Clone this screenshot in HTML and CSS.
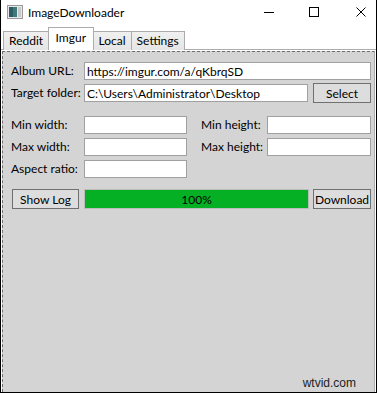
FILE: index.html
```html
<!DOCTYPE html>
<html lang="en">
<head>
    <meta charset="UTF-8">
    <meta name="viewport" content="width=device-width, initial-scale=1.0">
    <title>ImageDownloader</title>
    <link rel="stylesheet" href="styles.css">
</head>
<body>
    <div class="window">
        <div class="titlebar">
            <svg class="app-icon" width="16" height="14" viewBox="0 0 16 14">
                <rect x="0.5" y="0.5" width="15" height="13" fill="#e8e8e8" stroke="#9a9a9a"/>
                <rect x="2" y="2" width="8" height="10" fill="#3f7a7a"/>
                <rect x="2" y="2" width="4" height="10" fill="#2d5e66"/>
                <rect x="11" y="2" width="3" height="10" fill="#c8c8c8"/>
            </svg>
            <span class="title">ImageDownloader</span>
            <div class="controls">
                <svg class="ctl" width="10" height="10" viewBox="0 0 10 10"><path d="M0 5.5h10" stroke="#000" stroke-width="1"/></svg>
                <svg class="ctl" width="10" height="10" viewBox="0 0 10 10"><rect x="0.5" y="0.5" width="9" height="9" fill="none" stroke="#000"/></svg>
                <svg class="ctl" width="10" height="10" viewBox="0 0 10 10"><path d="M0.5 0.5l9 9M9.5 0.5l-9 9" stroke="#000" stroke-width="1"/></svg>
            </div>
        </div>

        <div class="tabstrip">
            <div class="tab">Reddit</div>
            <div class="tab active">Imgur</div>
            <div class="tab">Local</div>
            <div class="tab">Settings</div>
        </div>

        <div class="panel">
            <div class="source-grid">
                <label for="album">Album URL:</label>
                <input type="text" id="album" class="wide" value="https://imgur.com/a/qKbrqSD">
                <label for="folder">Target folder:</label>
                <input type="text" id="folder" value="C:\Users\Administrator\Desktop">
                <button class="btn">Select</button>
            </div>

            <div class="filter-grid">
                <label for="minw">Min width:</label>
                <input type="text" id="minw">
                <label for="minh" class="right-label">Min height:</label>
                <input type="text" id="minh">
                <label for="maxw">Max width:</label>
                <input type="text" id="maxw">
                <label for="maxh" class="right-label">Max height:</label>
                <input type="text" id="maxh">
                <label for="ratio">Aspect ratio:</label>
                <input type="text" id="ratio">
            </div>

            <div class="action-row">
                <button class="btn log-btn">Show Log</button>
                <div class="progress"><span>100%</span></div>
                <button class="btn dl-btn">Download</button>
            </div>

            <div class="watermark">wtvid.com</div>
        </div>
    </div>
</body>
</html>
```

FILE: styles.css
```css
body {
    margin: 0;
    padding: 0;
    font-family: Lato, "Noto Sans", sans-serif;
    font-size: 12px;
    color: #000;
    background: #fff;
}

.window {
    width: 377px;
    height: 393px;
    box-sizing: border-box;
    border: 1px solid #000;
    border-top: none;
    display: flex;
    flex-direction: column;
    background: #fff;
}

/* title bar */
.titlebar {
    height: 26px;
    display: flex;
    align-items: center;
    padding-left: 6px;
    background: #fff;
}

.app-icon {
    margin-top: -3px;
}

.title {
    margin-left: 5px;
    font-size: 12px;
    margin-top: -2px;
}

.controls {
    margin-left: auto;
    display: flex;
    align-items: center;
    padding-right: 10px;
    margin-top: -3px;
}

.ctl {
    display: block;
    margin-left: 35px;
}

.ctl:last-child {
    margin-left: 37px;
}

/* tabs */
.tabstrip {
    height: 23px;
    display: flex;
    align-items: flex-end;
    padding-left: 2px;
    border-bottom: 1px solid #acacac;
    background: #fff;
}

.tab {
    height: 19px;
    line-height: 18px;
    padding: 0 5px;
    box-sizing: border-box;
    border: 1px solid #acacac;
    border-bottom: none;
    margin-left: -1px;
    background: linear-gradient(#f0f0f0, #e5e5e5);
    margin-bottom: -1px;
}

.tab:first-child {
    margin-left: 0;
}

.tab.active {
    height: 23px;
    line-height: 20px;
    padding: 0 6.5px;
    background: #fff;
    position: relative;
    z-index: 1;
}

/* content */
.panel {
    flex: 1;
    position: relative;
    background: #d4d4d4;
    border-top: 1px dashed #6e6e6e;
    border-left: 1px dashed #6e6e6e;
    border-right: 1px solid #acacac;
    margin: 1px 1px 0 1px;
    padding: 10px 3px 0 8px;
}

label {
    display: block;
    line-height: 18px;
    white-space: nowrap;
}

input {
    height: 18px;
    box-sizing: border-box;
    border: 1px solid #a0a0a0;
    background: #fff;
    font-family: Lato, "Noto Sans", sans-serif;
    font-size: 12px;
    padding: 0 2px;
    margin: 0;
    outline: none;
    color: #000;
}

.btn {
    height: 20px;
    box-sizing: border-box;
    border: 1px solid #707070;
    background: #dddddd;
    font-family: Lato, "Noto Sans", sans-serif;
    font-size: 12px;
    padding: 0;
    margin: 0;
    color: #000;
}

.source-grid {
    display: grid;
    grid-template-columns: 73px 1fr 63px;
    row-gap: 3px;
    align-items: center;
}

.source-grid input {
    width: 100%;
}

.source-grid .wide {
    grid-column: 2 / 4;
}

.source-grid .btn {
    margin-left: 5px;
}

.filter-grid {
    display: grid;
    grid-template-columns: 73px 103px 80px 1fr;
    row-gap: 4px;
    margin-top: 13px;
    align-items: center;
}

.filter-grid input {
    width: 100%;
}

.right-label {
    padding-left: 14px;
}

.action-row {
    display: flex;
    align-items: center;
    margin-top: 11px;
    gap: 4px;
}

.log-btn {
    width: 67px;
    margin-left: 1px;
    margin-right: 1px;
}

.progress {
    width: 225px;
    height: 20px;
    background: #06b025;
    border: 1px solid #bcbcbc;
    box-sizing: border-box;
    display: flex;
    align-items: center;
    justify-content: center;
}

.dl-btn {
    width: 58px;
}

.watermark {
    position: absolute;
    right: 18px;
    bottom: 2px;
    font-family: "Liberation Sans", Arial, sans-serif;
    font-size: 12px;
    color: #222;
}
```
